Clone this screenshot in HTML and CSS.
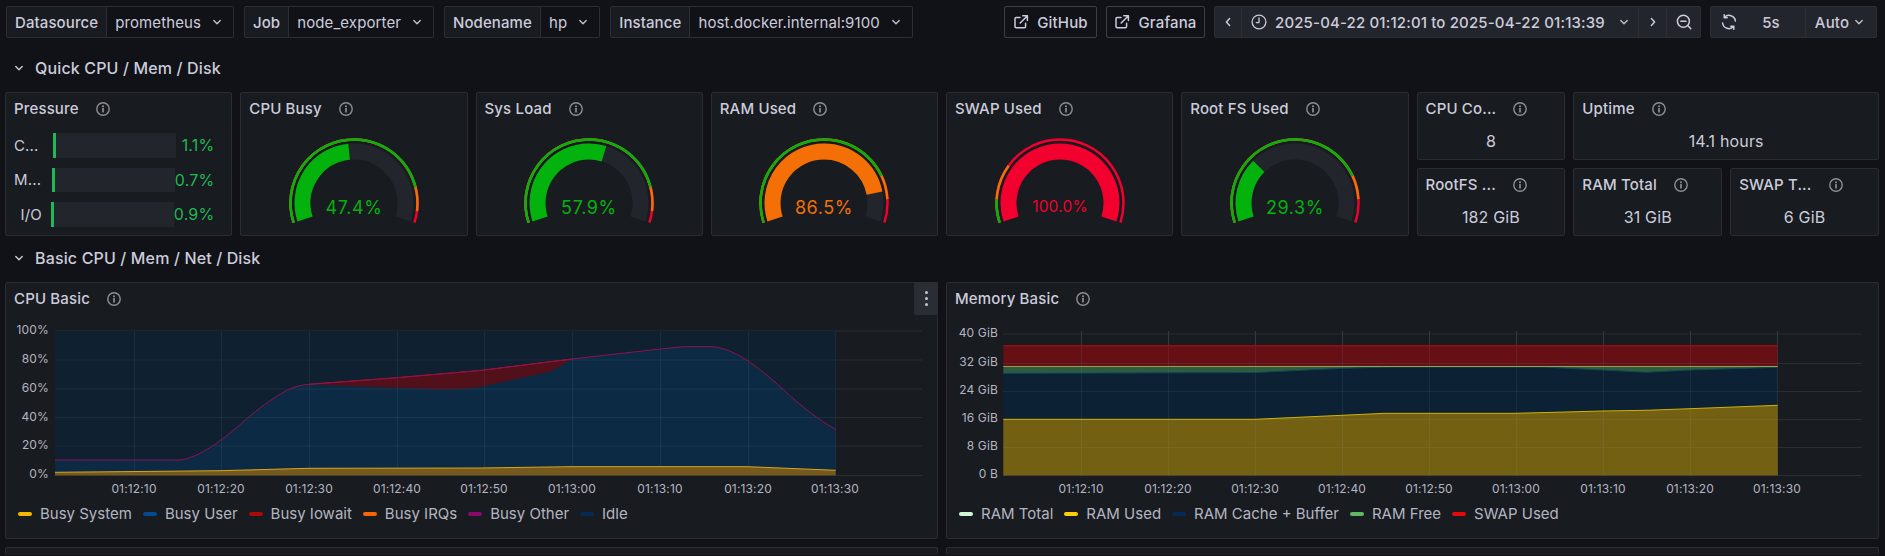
FILE: index.html
```html
<!DOCTYPE html>
<html lang="en">
<head>
  <meta charset="UTF-8" />
  <meta name="viewport" content="width=device-width, initial-scale=1.0" />
  <title>Node Exporter Full</title>
  <link rel="stylesheet" href="styles.css">
</head>
<body>
  <!-- shared icons and gauge arcs -->
  <svg class="defs" width="0" height="0" aria-hidden="true">
    <defs>
      <symbol id="i-chevron" viewBox="0 0 16 16"><path d="M4.8 6.6 8 9.8l3.2-3.2" fill="none" stroke="currentColor" stroke-width="1.4" stroke-linecap="round" stroke-linejoin="round"/></symbol>
      <symbol id="i-info" viewBox="0 0 16 16"><circle cx="8" cy="8" r="6.2" fill="none" stroke="currentColor" stroke-width="1.4"/><circle cx="8" cy="5.3" r="1" fill="currentColor"/><path d="M8 7.6v3.2" stroke="currentColor" stroke-width="1.7" stroke-linecap="round"/></symbol>
      <symbol id="i-link" viewBox="0 0 16 16"><path d="M12.6 9.2v3.4a1.2 1.2 0 0 1-1.2 1.2H3.2A1.2 1.2 0 0 1 2 12.6V4.6a1.2 1.2 0 0 1 1.2-1.2H7M9.8 1.8h4.6v4.6M14 2.2 7.2 9" fill="none" stroke="currentColor" stroke-width="1.5" stroke-linecap="round" stroke-linejoin="round"/></symbol>
      <path id="arc-main" d="M-48.98 15.91A51.5 51.5 0 1 1 48.98 15.91" pathLength="100" fill="none" stroke-width="16"/>
      <path id="arc-band" d="M-60.39 19.62A63.5 63.5 0 1 1 60.39 19.62" pathLength="100" fill="none" stroke-width="2.5"/>
    </defs>
  </svg>

  <header class="toolbar">
    <div class="var"><span class="var-label">Datasource</span><span class="var-value">prometheus<svg class="ico-chev"><use href="#i-chevron"/></svg></span></div>
    <div class="var"><span class="var-label">Job</span><span class="var-value">node_exporter<svg class="ico-chev"><use href="#i-chevron"/></svg></span></div>
    <div class="var"><span class="var-label">Nodename</span><span class="var-value">hp<svg class="ico-chev"><use href="#i-chevron"/></svg></span></div>
    <div class="var"><span class="var-label">Instance</span><span class="var-value">host.docker.internal:9100<svg class="ico-chev"><use href="#i-chevron"/></svg></span></div>

    <div class="toolbar-right">
      <a class="link-btn link-github"><svg class="ico"><use href="#i-link"/></svg>GitHub</a>
      <a class="link-btn link-grafana"><svg class="ico"><use href="#i-link"/></svg>Grafana</a>

      <div class="btn-group picker">
        <span class="seg seg-prev"><svg class="ico" viewBox="0 0 16 16"><path d="M9.6 4.6 6.4 8l3.2 3.4" fill="none" stroke="currentColor" stroke-width="1.5" stroke-linecap="round" stroke-linejoin="round"/></svg></span>
        <span class="seg seg-range">
          <svg class="ico" viewBox="0 0 16 16"><circle cx="8" cy="8" r="6.9" fill="none" stroke="currentColor" stroke-width="1.3"/><path d="M8 3.8V8.6H5.4" fill="none" stroke="currentColor" stroke-width="1.3" stroke-linecap="round" stroke-linejoin="round"/></svg>
          2025-04-22 01:12:01 to 2025-04-22 01:13:39
          <svg class="ico-chev range-chev"><use href="#i-chevron"/></svg>
        </span>
        <span class="seg seg-next"><svg class="ico" viewBox="0 0 16 16"><path d="M6.4 4.6 9.6 8l-3.2 3.4" fill="none" stroke="currentColor" stroke-width="1.5" stroke-linecap="round" stroke-linejoin="round"/></svg></span>
        <span class="seg seg-zoom"><svg class="ico" viewBox="0 0 16 16"><circle cx="7.4" cy="7.2" r="6" fill="none" stroke="currentColor" stroke-width="1.5"/><path d="M4.8 7.2h5.2M11.8 11.6l3 3.2" fill="none" stroke="currentColor" stroke-width="1.5" stroke-linecap="round"/></svg></span>
      </div>

      <div class="btn-group refresh">
        <span class="seg seg-sync"><svg class="ico" viewBox="0 0 16 16"><path d="M14.4 7A6.4 6.4 0 0 0 3.4 3.4M1.6 9a6.4 6.4 0 0 0 11 3.6M3.2 .8v3h3M12.8 15.2v-3h-3" fill="none" stroke="currentColor" stroke-width="1.5" stroke-linecap="round" stroke-linejoin="round"/></svg></span>
        <span class="seg seg-interval">5s</span>
        <span class="seg seg-auto">Auto<svg class="ico-chev"><use href="#i-chevron"/></svg></span>
      </div>
    </div>
  </header>

  <h2 class="row-title row-quick"><svg class="ico"><use href="#i-chevron"/></svg>Quick CPU / Mem / Disk</h2>

  <section class="grid grid-quick">
    <article class="panel span-gauge">
      <h3 class="panel-title"><span>Pressure</span><svg class="ico-info"><use href="#i-info"/></svg></h3>
      <div class="bars">
        <div class="bar-row"><span class="bar-label trunc">C...</span><span class="bar-track"><i class="bar-fill"></i></span><span class="bar-value">1.1%</span></div>
        <div class="bar-row"><span class="bar-label trunc">M...</span><span class="bar-track"><i class="bar-fill"></i></span><span class="bar-value">0.7%</span></div>
        <div class="bar-row"><span class="bar-label">I/O</span><span class="bar-track"><i class="bar-fill"></i></span><span class="bar-value">0.9%</span></div>
      </div>
    </article>

    <article class="panel span-gauge">
      <h3 class="panel-title"><span>CPU Busy</span><svg class="ico-info"><use href="#i-info"/></svg></h3>
      <svg class="gauge" viewBox="-100 -70 200 100">
        <use href="#arc-main" class="track"/>
        <use href="#arc-main" class="st-green" stroke-dasharray="47.4 100"/>
        <use href="#arc-band" class="st-red"/>
        <use href="#arc-band" class="st-orange" stroke-dasharray="95 100"/>
        <use href="#arc-band" class="st-green" stroke-dasharray="85 100"/>
        <text class="gauge-value fill-green" y="6">47.4%</text>
      </svg>
    </article>

    <article class="panel span-gauge">
      <h3 class="panel-title"><span>Sys Load</span><svg class="ico-info"><use href="#i-info"/></svg></h3>
      <svg class="gauge" viewBox="-100 -70 200 100">
        <use href="#arc-main" class="track"/>
        <use href="#arc-main" class="st-green" stroke-dasharray="57.9 100"/>
        <use href="#arc-band" class="st-red"/>
        <use href="#arc-band" class="st-orange" stroke-dasharray="95 100"/>
        <use href="#arc-band" class="st-green" stroke-dasharray="85 100"/>
        <text class="gauge-value fill-green" y="6">57.9%</text>
      </svg>
    </article>

    <article class="panel span-gauge">
      <h3 class="panel-title"><span>RAM Used</span><svg class="ico-info"><use href="#i-info"/></svg></h3>
      <svg class="gauge" viewBox="-100 -70 200 100">
        <use href="#arc-main" class="track"/>
        <use href="#arc-main" class="st-orange" stroke-dasharray="86.5 100"/>
        <use href="#arc-band" class="st-red"/>
        <use href="#arc-band" class="st-orange" stroke-dasharray="90 100"/>
        <use href="#arc-band" class="st-green" stroke-dasharray="80 100"/>
        <text class="gauge-value fill-orange" y="6">86.5%</text>
      </svg>
    </article>

    <article class="panel span-gauge">
      <h3 class="panel-title"><span>SWAP Used</span><svg class="ico-info"><use href="#i-info"/></svg></h3>
      <svg class="gauge" viewBox="-100 -70 200 100">
        <use href="#arc-main" class="st-red"/>
        <use href="#arc-band" class="st-red"/>
        <use href="#arc-band" class="st-orange" stroke-dasharray="25 100"/>
        <use href="#arc-band" class="st-green" stroke-dasharray="10 100"/>
        <text class="gauge-value gauge-small fill-red" y="5">100.0%</text>
      </svg>
    </article>

    <article class="panel span-gauge">
      <h3 class="panel-title"><span>Root FS Used</span><svg class="ico-info"><use href="#i-info"/></svg></h3>
      <svg class="gauge" viewBox="-100 -70 200 100">
        <use href="#arc-main" class="track"/>
        <use href="#arc-main" class="st-green" stroke-dasharray="29.3 100"/>
        <use href="#arc-band" class="st-red"/>
        <use href="#arc-band" class="st-orange" stroke-dasharray="90 100"/>
        <use href="#arc-band" class="st-green" stroke-dasharray="80 100"/>
        <text class="gauge-value fill-green" y="6">29.3%</text>
      </svg>
    </article>

    <article class="panel stat span-2">
      <h3 class="panel-title"><span>CPU Co...</span><svg class="ico-info"><use href="#i-info"/></svg></h3>
      <div class="stat-value">8</div>
    </article>
    <article class="panel stat span-4">
      <h3 class="panel-title"><span>Uptime</span><svg class="ico-info"><use href="#i-info"/></svg></h3>
      <div class="stat-value">14.1 hours</div>
    </article>
    <article class="panel stat span-2">
      <h3 class="panel-title"><span>RootFS ...</span><svg class="ico-info"><use href="#i-info"/></svg></h3>
      <div class="stat-value">182 GiB</div>
    </article>
    <article class="panel stat span-2">
      <h3 class="panel-title"><span>RAM Total</span><svg class="ico-info"><use href="#i-info"/></svg></h3>
      <div class="stat-value">31 GiB</div>
    </article>
    <article class="panel stat span-2">
      <h3 class="panel-title"><span>SWAP T...</span><svg class="ico-info"><use href="#i-info"/></svg></h3>
      <div class="stat-value">6 GiB</div>
    </article>
  </section>

  <h2 class="row-title row-basic"><svg class="ico"><use href="#i-chevron"/></svg>Basic CPU / Mem / Net / Disk</h2>

  <section class="grid grid-basic">
    <article class="panel chart-panel">
      <h3 class="panel-title"><span>CPU Basic</span><svg class="ico-info"><use href="#i-info"/></svg></h3>
      <span class="panel-menu"><i></i><i></i><i></i></span>
      <!-- viewBox follows page pixels minus the panel origin so points read off the graph directly -->
      <svg class="chart" viewBox="5 326 933 175">
        <path class="grid-line" d="M55 331H922M55 360H922M55 389H922M55 417.5H922M55 446H922M55 475.5H922"/>
        <rect class="area-idle" x="55" y="331" width="781" height="144.5"/>
        <path class="area-user" d="M55 460H180C190 459 205 452 221 440C236 429 248 417 260 408C272 399 283 392 290 389C296 386 302 385 309 384.3L397 377.7L480 370.5L572 359L660 349L683 346.7H713C725 348 738 354 748 361C762 370 775 382 787 393C800 405 820 421 835.7 429.3V475.5H55Z"/>
        <path class="area-iowait" d="M309 384.3L397 377.7L480 370.5L572 359L550 371.7L480 386.7C465 389.3 450 389.3 440 389.3L397 387.7Z"/>
        <path class="grid-over" d="M55 360H836M55 389H836M55 417.5H836M55 446H836M134.5 331V476M221.5 331V476M309.5 331V476M397.5 331V476M484.5 331V476M572.5 331V476M660.5 331V476M748.5 331V476M835.7 331V476"/>
        <path class="area-system" d="M55 472.3L221 470.7L309 468.3L480 468L570 466.7H748L835.7 470.3V475.5H55Z"/>
        <path class="line-system" d="M55 472.3L221 470.7L309 468.3L480 468L570 466.7H748L835.7 470.3"/>
        <path class="line-iowait" d="M309 384.3L397 377.7L480 370.5L572 359"/>
        <path class="line-other" d="M55 460H180C190 459 205 452 221 440C236 429 248 417 260 408C272 399 283 392 290 389C296 386 302 385 309 384.3L397 377.7L480 370.5L572 359L660 349L683 346.7H713C725 348 738 354 748 361C762 370 775 382 787 393C800 405 820 421 835.7 429.3"/>
        <g class="tick-y">
          <text x="49" y="331">100%</text><text x="49" y="360">80%</text><text x="49" y="389">60%</text><text x="49" y="417.5">40%</text><text x="49" y="446">20%</text><text x="49" y="475">0%</text>
        </g>
        <g class="tick-x">
          <text x="134" y="490">01:12:10</text><text x="221" y="490">01:12:20</text><text x="309" y="490">01:12:30</text><text x="397" y="490">01:12:40</text><text x="484" y="490">01:12:50</text><text x="572" y="490">01:13:00</text><text x="660" y="490">01:13:10</text><text x="748" y="490">01:13:20</text><text x="835" y="490">01:13:30</text>
        </g>
      </svg>
      <ul class="legend">
        <li><i class="key key-yellow"></i>Busy System</li>
        <li><i class="key key-blue"></i>Busy User</li>
        <li><i class="key key-darkred"></i>Busy Iowait</li>
        <li><i class="key key-orange"></i>Busy IRQs</li>
        <li><i class="key key-purple"></i>Busy Other</li>
        <li><i class="key key-navy"></i>Idle</li>
      </ul>
    </article>

    <article class="panel chart-panel">
      <h3 class="panel-title"><span>Memory Basic</span><svg class="ico-info"><use href="#i-info"/></svg></h3>
      <svg class="chart" viewBox="946 326 933 175">
        <path class="grid-line" d="M1003 334H1862M1003 363.5H1862M1003 391.5H1862M1003 419.5H1862M1003 447.5H1862M1003 475.5H1862"/>
        <path class="grid-line" d="M1081.5 331V476M1168.5 331V476M1255.5 331V476M1342.5 331V476M1429.5 331V476M1516.5 331V476M1603.5 331V476M1690.5 331V476M1777.5 331V476"/>
        <rect class="area-swap" x="1003.3" y="345.3" width="774.4" height="21"/>
        <path class="area-free" d="M1003.3 366.3H1777.7V367.3L1690 370L1646.7 372.3L1543 367H1390L1342 368.3L1255 372.6L1003.3 373.3Z"/>
        <path class="area-cache" d="M1003.3 373.3L1255 372.6L1342 368.3L1390 367H1543L1646.7 372.3L1690 370L1777.7 367.3V405.3L1690 408.7L1646 410.3L1603 411L1516 413.3H1385L1342 415.3L1255 419.3H1003.3Z"/>
        <path class="area-used" d="M1003.3 419.3H1255L1342 415.3L1385 413.3H1516L1603 411L1646 410.3L1690 408.7L1777.7 405.3V475.5H1003.3Z"/>
        <path class="grid-over" d="M1003 363.5H1778M1003 391.5H1778M1003 419.5H1778M1003 447.5H1778M1081.5 331V476M1168.5 331V476M1255.5 331V476M1342.5 331V476M1429.5 331V476M1516.5 331V476M1603.5 331V476M1690.5 331V476M1777.5 331V476"/>
        <path class="line-swap" d="M1003.3 345.8H1777.7"/>
        <path class="line-cache" d="M1003.3 373.3L1255 372.6L1342 368.3L1390 367H1543L1646.7 372.3L1690 370L1777.7 367.3"/>
        <path class="line-total" d="M1003.3 366.5H1777.7"/>
        <path class="line-used" d="M1003.3 419.3H1255L1342 415.3L1385 413.3H1516L1603 411L1646 410.3L1690 408.7L1777.7 405.3"/>
        <g class="tick-y">
          <text x="998" y="334">40 GiB</text><text x="998" y="363">32 GiB</text><text x="998" y="391">24 GiB</text><text x="998" y="419">16 GiB</text><text x="998" y="447">8 GiB</text><text x="998" y="475">0 B</text>
        </g>
        <g class="tick-x">
          <text x="1081" y="490">01:12:10</text><text x="1168" y="490">01:12:20</text><text x="1255" y="490">01:12:30</text><text x="1342" y="490">01:12:40</text><text x="1429" y="490">01:12:50</text><text x="1516" y="490">01:13:00</text><text x="1603" y="490">01:13:10</text><text x="1690" y="490">01:13:20</text><text x="1777" y="490">01:13:30</text>
        </g>
      </svg>
      <ul class="legend">
        <li><i class="key key-mint"></i>RAM Total</li>
        <li><i class="key key-gold"></i>RAM Used</li>
        <li><i class="key key-navy"></i>RAM Cache + Buffer</li>
        <li><i class="key key-green"></i>RAM Free</li>
        <li><i class="key key-red"></i>SWAP Used</li>
      </ul>
    </article>

    <article class="panel stub"></article>
    <article class="panel stub"></article>
  </section>
</body>
</html>
```

FILE: styles.css
```css
* {
  box-sizing: border-box;
}

html,
body {
  height: 556px;
  overflow: hidden;
}

body {
  margin: 0;
  background: #111217;
  color: #ccccdc;
  font-family: Inter, "Noto Sans", sans-serif;
  font-size: 15px;
  letter-spacing: 0.15px;
}

.defs {
  position: absolute;
}

.ico {
  width: 16px;
  height: 16px;
  flex: none;
}

.ico-chev {
  width: 16px;
  height: 16px;
  flex: none;
  color: #c0c0ce;
}

/* Top bar: variables on the left, links and pickers on the right */
.toolbar {
  display: flex;
  height: 32px;
  margin: 6px 8px 0 6px;
}

.var {
  display: flex;
  height: 32px;
  margin-right: 10px;
  letter-spacing: 0.1px;
}

.var-label {
  display: flex;
  align-items: center;
  padding: 0 8px;
  background: #181b1f;
  border: 1px solid #2c2e33;
  border-radius: 2px 0 0 2px;
  font-weight: 500;
}

.var-value {
  display: flex;
  align-items: center;
  gap: 8px;
  padding: 0 8px;
  background: #111217;
  border: 1px solid #2c2e33;
  border-left: 0;
  border-radius: 0 2px 2px 0;
}

.toolbar-right {
  display: flex;
  gap: 9px;
  margin-left: auto;
}

.link-btn {
  display: flex;
  align-items: center;
  justify-content: center;
  gap: 8px;
  height: 32px;
  background: #111217;
  border: 1px solid #3c3e44;
  border-radius: 2px;
  font-weight: 500;
}

.link-github {
  width: 93px;
}

.link-grafana {
  width: 99px;
}

.btn-group {
  display: flex;
  height: 32px;
  background: #22252b;
  border: 1px solid #2c2e33;
  border-radius: 2px;
}

.seg {
  display: flex;
  align-items: center;
  justify-content: center;
  border-left: 1px solid #2c2e33;
}

.seg:first-child {
  border-left: 0;
}

.picker {
  width: 487px;
}

.seg-prev {
  width: 26px;
}

.seg-range {
  flex: 1;
  justify-content: flex-start;
  gap: 8px;
  padding-left: 9px;
  font-weight: 500;
  white-space: nowrap;
}

.range-chev {
  margin-left: 3px;
}

.seg-next {
  width: 28px;
}

.seg-zoom {
  width: 34px;
}

.refresh {
  width: 167px;
}

.seg-sync {
  width: 36px;
}

.seg-interval {
  flex: 1;
  padding-right: 10px;
  border-left: 0;
  font-weight: 500;
}

.seg-auto {
  width: 71px;
  gap: 2px;
  font-weight: 500;
}

/* Collapsible row headings */
.row-title {
  display: flex;
  align-items: center;
  gap: 8px;
  margin: 0;
  padding-left: 11px;
  font-size: 16px;
  font-weight: 500;
  line-height: 24px;
}

.row-quick {
  margin-top: 18px;
}

.row-basic {
  margin-top: 10px;
}

/* Dashboard grid, 24 columns like Grafana */
.grid {
  display: grid;
  grid-template-columns: repeat(24, 1fr);
  gap: 8px;
  width: 1874px;
  margin-left: 5px;
}

.grid-quick {
  grid-template-rows: 68px 68px;
  margin-top: 12px;
  grid-auto-flow: dense;
}

.grid-basic {
  grid-template-rows: 257px 8px;
  margin-top: 12px;
}

.panel {
  position: relative;
  display: flex;
  flex-direction: column;
  min-width: 0;
  background: #181b1f;
  border: 1px solid #2a2c31;
  border-radius: 2px;
}

.span-gauge {
  grid-column: span 3;
  grid-row: span 2;
}

.span-2 {
  grid-column: span 2;
}

.span-4 {
  grid-column: span 4;
}

.chart-panel,
.stub {
  grid-column: span 12;
}

.stub {
  border-bottom: 0;
}

.panel-title {
  display: flex;
  align-items: center;
  gap: 16px;
  height: 31px;
  margin: 0;
  padding: 0 8px;
  font-size: 15px;
  font-weight: 500;
  white-space: nowrap;
}

.ico-info {
  width: 16px;
  height: 16px;
  flex: none;
  color: #8d8e98;
}

.panel-menu {
  position: absolute;
  top: -1px;
  right: -1px;
  display: flex;
  flex-direction: column;
  align-items: center;
  justify-content: center;
  gap: 3px;
  width: 24px;
  height: 33px;
  background: #2a2d33;
  border-radius: 2px;
}

.panel-menu i {
  width: 3px;
  height: 3px;
  background: #c4c5d0;
  border-radius: 50%;
}

/* Pressure bar gauge */
.bars {
  display: flex;
  flex-direction: column;
  gap: 10px;
  padding: 9px 17px 0 8px;
}

.bar-row {
  display: flex;
  align-items: center;
  height: 24.5px;
}

.bar-label {
  width: 30px;
  margin-right: 9px;
  text-align: right;
  white-space: nowrap;
}

.bar-label.trunc {
  text-align: left;
}

.bar-track {
  flex: none;
  width: 123px;
  height: 100%;
  background: #22252b;
}

.bar-fill {
  display: block;
  width: 3px;
  height: 100%;
  background: #1fb955;
}

.bar-value {
  flex: 1;
  color: #1fb955;
  font-size: 16px;
  text-align: right;
  white-space: nowrap;
}

/* Gauges: arcs are one shared path, cut with dash arrays */
.gauge {
  display: block;
  position: absolute;
  left: 12.6px;
  top: 40px;
  width: 200px;
  height: 100px;
}

.track {
  stroke: #22252b;
}

.st-green {
  stroke: #03b20d;
}

.st-orange {
  stroke: #f46f06;
}

.st-red {
  stroke: #f2002e;
}

.fill-green {
  fill: #03b20d;
}

.fill-orange {
  fill: #f46f06;
}

.fill-red {
  fill: #f2002e;
}

.gauge-value {
  font-size: 18px;
  text-anchor: middle;
  dominant-baseline: middle;
  letter-spacing: 0.6px;
}

.gauge-small {
  font-size: 15.5px;
  letter-spacing: 0.2px;
}

/* Stat panels */
.stat-value {
  padding-top: 7px;
  font-size: 16px;
  line-height: 20px;
  text-align: center;
}

/* Time series */
.chart {
  display: block;
  position: absolute;
  left: -1px;
  top: 43px;
  width: 933px;
  height: 175px;
  overflow: visible;
}

.tick-y text,
.tick-x text {
  fill: #b4b5c2;
  font-size: 12px;
  dominant-baseline: middle;
}

.tick-y text {
  text-anchor: end;
}

.tick-x text {
  text-anchor: middle;
}

.grid-line {
  fill: none;
  stroke: #2b2d32;
  stroke-width: 1;
}

.grid-over {
  fill: none;
  stroke: rgba(130, 190, 200, 0.09);
  stroke-width: 1;
}

.area-idle {
  fill: #0f2030;
}

.area-user {
  fill: #0d2a44;
}

.area-iowait {
  fill: #52101a;
}

.area-system {
  fill: #76591c;
}

.area-swap {
  fill: #661016;
}

.area-free {
  fill: #2e5b3e;
}

.area-cache {
  fill: #0c2134;
}

.area-used {
  fill: #736013;
}

.line-system,
.line-iowait,
.line-other,
.line-swap,
.line-total,
.line-cache,
.line-used {
  fill: none;
  stroke-width: 1;
}

.line-system {
  stroke: #d8a51f;
}

.line-iowait {
  stroke: #c00a1a;
}

.line-other {
  stroke: #8f1250;
}

.line-swap {
  stroke: #b30d14;
}

.line-total {
  stroke: #93a04e;
}

.line-cache {
  stroke: #0c4a5a;
}

.line-used {
  stroke: #d0b10e;
}

.legend {
  position: absolute;
  left: 12px;
  top: 221px;
  display: flex;
  gap: 11px;
  margin: 0;
  padding: 0;
  list-style: none;
  color: #b4b5c2;
  letter-spacing: 0;
  line-height: 20px;
  white-space: nowrap;
}

.legend li {
  display: flex;
  align-items: center;
  gap: 8px;
}

.key {
  width: 14px;
  height: 4px;
  border-radius: 2px;
}

.key-yellow {
  background: #f2b705;
}

.key-blue {
  background: #034a8f;
}

.key-darkred {
  background: #a80a0a;
}

.key-orange {
  background: #f86503;
}

.key-purple {
  background: #8a0a6c;
}

.key-navy {
  background: #042b54;
}

.key-mint {
  background: #d0f6d8;
}

.key-gold {
  background: #fbce0a;
}

.key-green {
  background: #5fb865;
}

.key-red {
  background: #e40a0a;
}
```
